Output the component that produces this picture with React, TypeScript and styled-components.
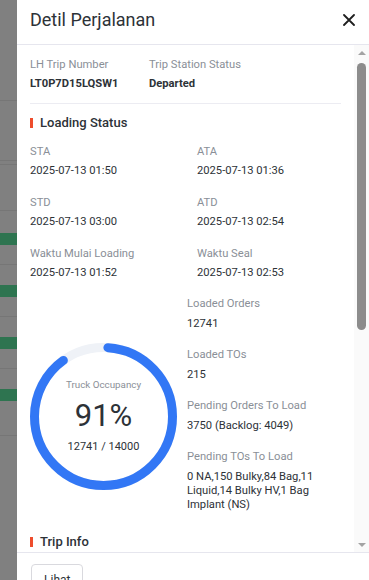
import React from 'react';
import styled, { createGlobalStyle } from 'styled-components';

const GlobalStyle = createGlobalStyle`
  html, body {
    margin: 0;
    padding: 0;
    height: 100%;
    overflow: hidden;
  }
  body {
    font-family: Roboto, "Noto Sans", "Liberation Sans", sans-serif;
    color: #2d3237;
  }
`;

const Page = styled.div`
  height: 100vh;
  overflow: hidden;
  background: #808080;
  display: flex;
  flex-direction: column;
`;

const BgRow = styled.div<{ $h: number; $green?: boolean; $line?: boolean }>`
  height: ${(p) => p.$h}px;
  flex-shrink: 0;
  background: ${(p) => (p.$green ? '#2e7450' : 'transparent')};
  border-bottom: ${(p) => (p.$line ? '1px solid #767676' : 'none')};
`;

const Drawer = styled.aside`
  position: fixed;
  top: 0;
  right: 0;
  width: 352px;
  height: 609px;
  background: #fff;
  display: flex;
  flex-direction: column;
`;

const Header = styled.header`
  height: 45px;
  flex-shrink: 0;
  box-sizing: border-box;
  display: flex;
  align-items: center;
  justify-content: space-between;
  padding: 0 14px 5px 13px;
  border-bottom: 1px solid #e6e6ee;
`;

const Title = styled.h2`
  margin: 0;
  font-size: 18px;
  font-weight: 400;
  color: #2d3237;
`;

const CloseButton = styled.button`
  border: 0;
  background: none;
  padding: 0;
  width: 12px;
  height: 12px;
  display: flex;
  align-items: center;
  justify-content: center;
  cursor: pointer;
`;

const Body = styled.div`
  height: 507px;
  flex-shrink: 0;
  display: flex;
`;

const Content = styled.div`
  flex: 1;
  overflow: hidden;
  padding: 11px 13px 24px;
`;

const ScrollTrack = styled.div`
  width: 15px;
  flex-shrink: 0;
  background: #fafafa;
  display: flex;
  flex-direction: column;
  align-items: center;
`;

const ScrollArrow = styled.div<{ $down?: boolean }>`
  width: 15px;
  height: 15px;
  flex-shrink: 0;
  display: flex;
  align-items: center;
  justify-content: center;
  margin-top: ${(p) => (p.$down ? 'auto' : '0')};

  &::after {
    content: '';
    border-left: 4.5px solid transparent;
    border-right: 4.5px solid transparent;
    ${(p) => (p.$down ? 'border-top: 4.5px solid #a3a3a3;' : 'border-bottom: 4.5px solid #a3a3a3;')}
  }
`;

const ScrollThumb = styled.div`
  width: 9px;
  height: 267px;
  margin-top: 3px;
  border-radius: 5px;
  background: #8c8c8c;
`;

const TopRow = styled.div`
  display: grid;
  grid-template-columns: 119px 1fr;
  padding-bottom: 10px;
  border-bottom: 1px solid #ececf2;
`;

const Field = styled.div``;

const Label = styled.div`
  font-size: 11.2px;
  line-height: 18px;
  color: #8a8f97;
`;

const Value = styled.div<{ $bold?: boolean }>`
  margin-top: 1px;
  font-size: 11.2px;
  line-height: 18px;
  color: #2d3237;
  font-weight: ${(p) => (p.$bold ? 700 : 400)};
`;

const SectionTitle = styled.h3<{ $gap?: number }>`
  margin: ${(p) => p.$gap ?? 9}px 0 0;
  display: flex;
  align-items: center;
  gap: 7px;
  font-size: 13px;
  line-height: 20px;
  font-weight: 500;
  color: #2d3237;

  &::before {
    content: '';
    width: 3px;
    height: 10px;
    background: #ee4d2d;
  }
`;

const InfoGrid = styled.div`
  margin-top: 10px;
  display: grid;
  grid-template-columns: 167px 1fr;
  row-gap: 14px;
`;

const LoadingBlock = styled.div`
  margin-top: 13px;
  display: flex;
  gap: 10px;
  align-items: flex-start;
`;

const Gauge = styled.div`
  position: relative;
  width: 147px;
  height: 147px;
  margin-top: 48px;
  flex-shrink: 0;
`;

const GaugeText = styled.div`
  position: absolute;
  inset: 0;
  display: flex;
  flex-direction: column;
  align-items: center;
  justify-content: center;
`;

const GaugeCaption = styled.div`
  font-size: 9.8px;
  line-height: 14px;
  color: #8a8f97;
`;

const GaugePercent = styled.div`
  font-size: 31px;
  line-height: 40px;
  margin-top: 4px;
  color: #2d3237;
`;

const GaugeCount = styled.div`
  font-size: 11px;
  line-height: 16px;
  margin-top: 3px;
  color: #2d3237;
`;

const StatList = styled.div`
  flex: 1;
  display: flex;
  flex-direction: column;
  gap: 15px;
`;

const StatValue = styled.div`
  margin-top: 4px;
  font-size: 11.2px;
  line-height: 14px;
  color: #2d3237;
`;

const Footer = styled.footer`
  flex: 1;
  border-top: 1px solid #e6e6ee;
  padding: 11px 14px;
`;

const Button = styled.button`
  height: 32px;
  padding: 0 12px;
  border: 1px solid #d9d9de;
  border-radius: 4px;
  background: #fff;
  font-family: inherit;
  font-size: 12px;
  color: #2d3237;
`;

const GaugeRing: React.FC<{ percent: number }> = ({ percent }) => {
  const size = 147;
  const sw = 9;
  const r = (size - sw) / 2;
  const c = 2 * Math.PI * r;
  const len = (percent / 100) * c - sw;
  return (
    <svg width={size} height={size} viewBox={`0 0 ${size} ${size}`}>
      <circle cx={size / 2} cy={size / 2} r={r} fill="none" stroke="#eff2f7" strokeWidth={sw} />
      <circle
        cx={size / 2}
        cy={size / 2}
        r={r}
        fill="none"
        stroke="#3277f5"
        strokeWidth={sw}
        strokeLinecap="round"
        strokeDasharray={`${len} ${c}`}
        strokeDashoffset={-sw / 2}
        transform={`rotate(-90 ${size / 2} ${size / 2})`}
      />
    </svg>
  );
};

const loadingFields = [
  ['STA', '2025-07-13 01:50'],
  ['ATA', '2025-07-13 01:36'],
  ['STD', '2025-07-13 03:00'],
  ['ATD', '2025-07-13 02:54'],
  ['Waktu Mulai Loading', '2025-07-13 01:52'],
  ['Waktu Seal', '2025-07-13 02:53'],
];

const stats = [
  ['Loaded Orders', '12741'],
  ['Loaded TOs', '215'],
  ['Pending Orders To Load', '3750 (Backlog: 4049)'],
  ['Pending TOs To Load', '0 NA,150 Bulky,84 Bag,11 Liquid,14 Bulky HV,1 Bag Implant (NS)'],
];

const tripFields = [
  ['Origin', 'SOC 1'],
  ['Destination', 'LH Hub 3'],
  ['Vehicle Type', 'CDD Long'],
  ['Plat Nomor', 'B 9123 TXK'],
  ['Driver', 'Ahmad S.'],
  ['Seal Number', 'SL0098231'],
];

const bgRows: Array<{ h: number; green?: boolean; line?: boolean }> = [
  { h: 100, line: true },
  { h: 59, line: true },
  { h: 3, line: true },
  { h: 45, line: true },
  { h: 22 },
  { h: 12, green: true },
  { h: 19, line: true },
  { h: 20 },
  { h: 12, green: true },
  { h: 19, line: true },
  { h: 20 },
  { h: 12, green: true },
  { h: 19, line: true },
  { h: 20 },
  { h: 12, green: true },
  { h: 34, line: true },
];

export default function App() {
  return (
    <>
      <GlobalStyle />
      <Page>
        {bgRows.map((r, i) => (
          <BgRow key={i} $h={r.h} $green={r.green} $line={r.line} />
        ))}
      </Page>
      <Drawer>
        <Header>
          <Title>Detil Perjalanan</Title>
          <CloseButton aria-label="close">
            <svg width="12" height="12" viewBox="0 0 12 12">
              <path d="M1 1L11 11M11 1L1 11" stroke="#1f1f1f" strokeWidth="1.8" strokeLinecap="round" />
            </svg>
          </CloseButton>
        </Header>
        <Body>
          <Content>
            <TopRow>
              <Field>
                <Label>LH Trip Number</Label>
                <Value $bold>LT0P7D15LQSW1</Value>
              </Field>
              <Field>
                <Label>Trip Station Status</Label>
                <Value $bold>Departed</Value>
              </Field>
            </TopRow>

            <SectionTitle>Loading Status</SectionTitle>
            <InfoGrid>
              {loadingFields.map(([l, v]) => (
                <Field key={l}>
                  <Label>{l}</Label>
                  <Value>{v}</Value>
                </Field>
              ))}
            </InfoGrid>

            <LoadingBlock>
              <Gauge>
                <GaugeRing percent={91} />
                <GaugeText>
                  <GaugeCaption>Truck Occupancy</GaugeCaption>
                  <GaugePercent>91%</GaugePercent>
                  <GaugeCount>12741 / 14000</GaugeCount>
                </GaugeText>
              </Gauge>
              <StatList>
                {stats.map(([l, v]) => (
                  <Field key={l}>
                    <Label>{l}</Label>
                    <StatValue>{v}</StatValue>
                  </Field>
                ))}
              </StatList>
            </LoadingBlock>

            <SectionTitle $gap={20}>Trip Info</SectionTitle>
            <InfoGrid>
              {tripFields.map(([l, v]) => (
                <Field key={l}>
                  <Label>{l}</Label>
                  <Value>{v}</Value>
                </Field>
              ))}
            </InfoGrid>
          </Content>
          <ScrollTrack>
            <ScrollArrow />
            <ScrollThumb />
            <ScrollArrow $down />
          </ScrollTrack>
        </Body>
        <Footer>
          <Button>Lihat</Button>
        </Footer>
      </Drawer>
    </>
  );
}
